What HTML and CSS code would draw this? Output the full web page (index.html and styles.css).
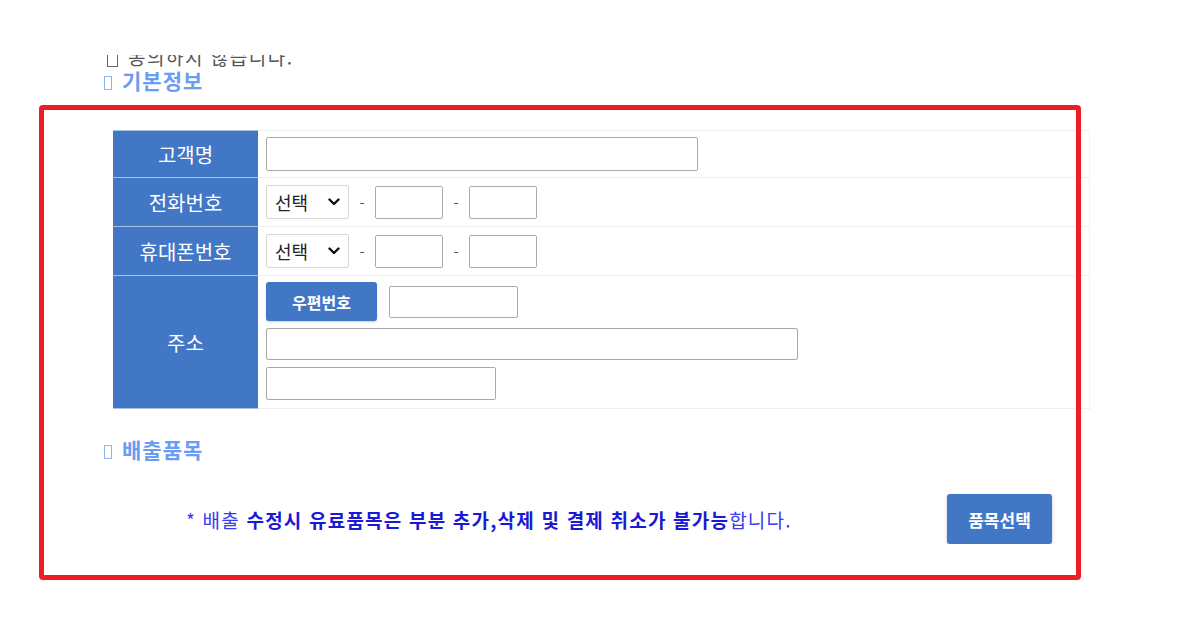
FILE: index.html
```html
<!DOCTYPE html>
<html lang="ko">
<head>
    <meta charset="UTF-8">
    <meta name="viewport" content="width=device-width, initial-scale=1.0">
    <title>배출 신청</title>
    <link rel="stylesheet" href="styles.css">
</head>
<body>
    <div class="page">
        <div class="agree-clip">
            <div class="agree-line"><span class="mark mark-gray"></span>동의하지 않습니다.</div>
        </div>
        <h3 class="section-title"><span class="mark"></span>기본정보</h3>
        <table class="info-table">
            <tr class="row-name">
                <th>고객명</th>
                <td><input type="text" class="inp inp-name"></td>
            </tr>
            <tr class="row-tel">
                <th>전화번호</th>
                <td>
                    <div class="phone">
                        <select class="sel"><option>선택</option></select>
                        <span class="dash">-</span>
                        <input type="text" class="inp inp-short">
                        <span class="dash">-</span>
                        <input type="text" class="inp inp-short">
                    </div>
                </td>
            </tr>
            <tr class="row-tel">
                <th>휴대폰번호</th>
                <td>
                    <div class="phone">
                        <select class="sel"><option>선택</option></select>
                        <span class="dash">-</span>
                        <input type="text" class="inp inp-short">
                        <span class="dash">-</span>
                        <input type="text" class="inp inp-short">
                    </div>
                </td>
            </tr>
            <tr class="row-addr">
                <th>주소</th>
                <td>
                    <div class="addr">
                        <div class="zip-line">
                            <button type="button" class="btn-zip">우편번호</button>
                            <input type="text" class="inp inp-zip">
                        </div>
                        <input type="text" class="inp inp-addr">
                        <input type="text" class="inp inp-addr2">
                    </div>
                </td>
            </tr>
        </table>
        <h3 class="section-title title-items"><span class="mark"></span>배출품목</h3>
        <div class="items-bar">
            <p class="notice">* 배출 <b>수정시 유료품목은 부분 추가,삭제 및 결제 취소가 불가능</b>합니다.</p>
            <button type="button" class="btn-items">품목선택</button>
        </div>
    </div>
    <div class="highlight"></div>
</body>
</html>
```

FILE: styles.css
```css
body {
    margin: 0;
    padding: 0;
    background: #fff;
    font-family: "Noto Sans CJK KR", "Noto Sans", sans-serif;
    color: #333;
}
.page {
    padding-top: 55px;
    padding-left: 104px;
    width: 986px;
}
.agree-clip {
    height: 12px;
    overflow: hidden;
    padding-left: 3px;
}
.agree-line {
    margin-top: -8px;
    font-size: 19px;
    line-height: 20px;
    letter-spacing: 1.5px;
    color: #555;
}
.mark {
    display: inline-block;
    box-sizing: border-box;
    width: 8px;
    height: 14px;
    margin-right: 10px;
    border: 1.5px solid #8fb3f5;
    vertical-align: -1px;
}
.mark-gray {
    width: 11px;
    height: 16px;
    border-color: #666;
    vertical-align: -2px;
}
.section-title {
    margin: 0;
    font-size: 21px;
    line-height: 26px;
    font-weight: bold;
    letter-spacing: 1px;
    color: #6a9cf2;
}
.info-table {
    margin-top: 37px;
    margin-left: 9px;
    width: 977px;
    border-collapse: collapse;
}
.info-table th {
    width: 145px;
    padding: 0;
    background: #4277c6;
    color: #fff;
    font-size: 20px;
    font-weight: normal;
    border-bottom: 1px solid #a9c0e6;
    border-top: 1px solid #a9c0e6;
}
.info-table td {
    padding: 0 0 0 8px;
    border-top: 1px solid #efefef;
    border-bottom: 1px solid #efefef;
    border-right: 1px solid #f3f3f3;
}
.row-name {
    height: 47px;
}
.row-tel {
    height: 49px;
}
.row-addr {
    height: 133px;
}
.inp {
    display: block;
    box-sizing: border-box;
    border: 1px solid #a8a8ad;
    border-radius: 2px;
    background: #fff;
    margin: 0;
    padding: 0 6px;
    font-size: 15px;
}
.inp-name {
    width: 432px;
    height: 34px;
}
.phone {
    display: flex;
    align-items: center;
}
.sel {
    appearance: none;
    -webkit-appearance: none;
    box-sizing: border-box;
    width: 83px;
    height: 34px;
    border: 1px solid #d6d6d6;
    border-radius: 2px;
    background: #fff url("data:image/svg+xml;utf8,<svg xmlns='http://www.w3.org/2000/svg' width='12' height='8' viewBox='0 0 12 8'><path d='M1.5 1.5 6 6l4.5-4.5' fill='none' stroke='%23111' stroke-width='2.4' stroke-linecap='round' stroke-linejoin='round'/></svg>") no-repeat right 8px center;
    font-family: "Noto Sans CJK KR", sans-serif;
    font-size: 18px;
    color: #222;
    padding: 0 0 0 8px;
}
.dash {
    width: 26px;
    text-align: center;
    font-size: 15px;
    color: #555;
}
.inp-short {
    width: 68px;
    height: 33px;
}
.addr {
    display: flex;
    flex-direction: column;
    gap: 7px;
    padding: 2px 0 4px;
}
.zip-line {
    display: flex;
    align-items: center;
    gap: 12px;
}
.btn-zip {
    width: 111px;
    height: 39px;
    background: #4277c6;
    color: #fff;
    border: none;
    border-radius: 3px;
    font-family: "Noto Sans CJK KR", sans-serif;
    font-size: 16px;
    font-weight: bold;
    box-shadow: 0 1px 2px rgba(0, 0, 0, 0.2);
}
.inp-zip {
    width: 129px;
    height: 32px;
}
.inp-addr {
    width: 532px;
    height: 32px;
}
.inp-addr2 {
    width: 230px;
    height: 33px;
}
.title-items {
    margin-top: 27px;
}
.items-bar {
    display: flex;
    align-items: center;
    margin-top: 32px;
    margin-left: 82px;
}
.notice {
    margin: 0;
    font-size: 19px;
    letter-spacing: 1.2px;
    color: #3a3af0;
    flex: 1;
}
.notice b {
    color: #1a1ad4;
}
.btn-items {
    width: 105px;
    height: 50px;
    margin-right: 38px;
    background: #4277c6;
    color: #fff;
    border: none;
    border-radius: 3px;
    font-family: "Noto Sans CJK KR", sans-serif;
    font-size: 17px;
    font-weight: bold;
    box-shadow: 0 1px 3px rgba(0, 0, 0, 0.25);
}
.highlight {
    position: absolute;
    left: 39px;
    top: 105px;
    width: 1032px;
    height: 465px;
    border: 5px solid #ee1c25;
    border-radius: 4px;
}
```
